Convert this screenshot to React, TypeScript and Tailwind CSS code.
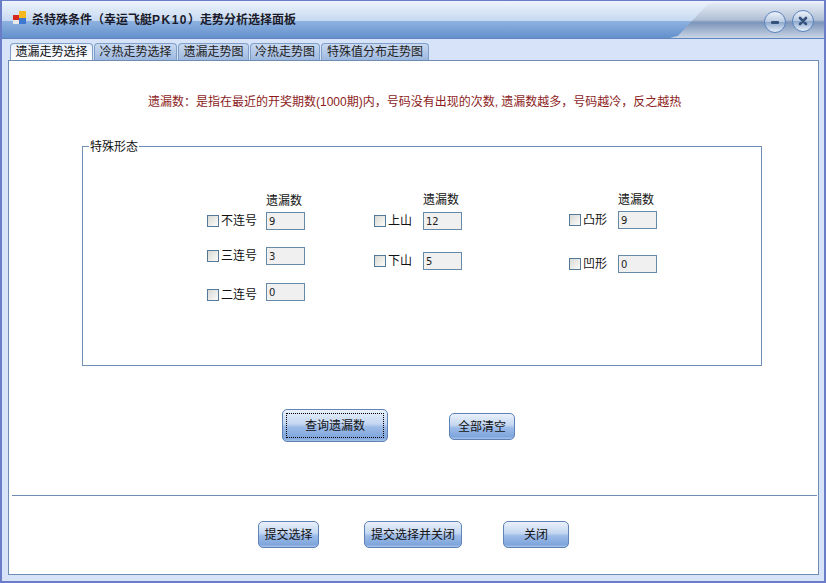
const font = 'font-["Liberation_Sans","Noto_Sans_CJK_SC",sans-serif]';

const tabs = [
  { label: '遗漏走势选择', width: 'w-[83px]' },
  { label: '冷热走势选择', width: 'w-[83px]' },
  { label: '遗漏走势图', width: 'w-[71px]' },
  { label: '冷热走势图', width: 'w-[70px]' },
  { label: '特殊值分布走势图', width: 'w-[108px]' },
];

function Check({ label, labelWidth }: { label: string; labelWidth: string }) {
  return (
    <label className={`flex items-center ${labelWidth}`}>
      <input
        type="checkbox"
        className="h-[12px] w-[12px] shrink-0 appearance-none border border-[#55799b] bg-gradient-to-br from-[#d9d9d4] to-[#fbfbfb]"
      />
      <span className="ml-[2px] text-[12px] leading-[16px] whitespace-nowrap text-[#111]">{label}</span>
    </label>
  );
}

function CountBox({ value }: { value: string }) {
  return (
    <input
      readOnly
      value={value}
      className='h-[18px] w-[39px] border border-[#6489a9] bg-[#f0f0f0] pl-[2px] font-["DejaVu_Sans",sans-serif] text-[10px] text-[#222] outline-none'
    />
  );
}

function ActionButton({ label, width }: { label: string; width: string }) {
  return (
    <button
      className={`flex h-[27px] items-center justify-center rounded-[5px] border border-[#5f83b5] bg-[linear-gradient(#eaf1fb,#c3d6f1_45%,#9dbbe8_55%,#7fa6dc_90%,#a6c2ea)] text-[12px] text-[#111] ${width}`}
    >
      {label}
    </button>
  );
}

function WindowButton({ children, className }: { children: React.ReactNode; className: string }) {
  return (
    <div
      className={`flex h-[22px] w-[22px] items-center justify-center rounded-full border border-[#5b84bd] bg-[linear-gradient(#eef3fa,#b9cbe3_48%,#8ea9ce_52%,#e6f0fb)] ${className}`}
    >
      {children}
    </div>
  );
}

export default function App() {
  return (
    <div className={`flex h-[583px] w-[826px] flex-col border-x-[2px] border-t-[1px] border-b-[2px] border-[#6a7dc6] bg-[#d6e3f8] ${font}`}>
      {/* title bar */}
      <div className="relative flex h-[38px] shrink-0 items-center border-b border-[#5f86bd] bg-[linear-gradient(#eef4fc,#c6d9f1_53%,#8db2e0_55%,#6490cc)] pl-[11px]">
        <svg width="16" height="14" viewBox="0 0 16 14" className="-mt-[3px] shrink-0">
          <rect x="0" y="4" width="6" height="5" fill="#d8281c" />
          <rect x="6" y="0" width="7" height="7" fill="#f5b81e" />
          <rect x="0" y="9" width="6" height="4" fill="#e8e8e8" />
          <rect x="6" y="7" width="7" height="6" fill="#3f78d0" />
        </svg>
        <span className="ml-[3px] text-[12px] font-bold whitespace-nowrap text-[#1a1a2a]">
          杀特殊条件（幸运飞艇<span className="tracking-[1.5px]">PK10</span>）走势分析选择面板
        </span>
        <div className="absolute top-0 right-0 bottom-0 w-[154px] bg-[linear-gradient(#e9eff8,#b3c1d6_50%,#7c95ba_58%,#c9d5e6)] [clip-path:polygon(0_100%,8px_94%,38px_8%,46px_4%,100%_4%,100%_100%)]" />
        <div className="absolute top-[8px] right-[10px] flex items-center gap-[6px]">
          <WindowButton className="mt-[2px]">
            <span className="h-[3px] w-[8px] rounded-[1px] bg-[#34527c]" />
          </WindowButton>
          <WindowButton className="">
            <svg width="10" height="10" viewBox="0 0 10 10">
              <path d="M2 2 L8 8 M8 2 L2 8" stroke="#34527c" strokeWidth="2.6" strokeLinecap="round" />
            </svg>
          </WindowButton>
        </div>
      </div>

      {/* tabs */}
      <div className="mt-[4px] flex h-[17px] shrink-0 gap-[1px] pl-[8px]">
        {tabs.map((tab, i) => (
          <div
            key={tab.label}
            className={`flex items-center justify-center rounded-t-[4px] border border-b-0 border-[#7f9fc8] text-[12px] leading-none ${tab.width} ${
              i === 0
                ? 'bg-gradient-to-b from-[#e6eefa] to-white text-[#111]'
                : 'bg-gradient-to-b from-[#c9d9f0] to-[#9db8df] text-[#222]'
            }`}
          >
            {tab.label}
          </div>
        ))}
      </div>

      {/* panel */}
      <div className="mr-[5px] mb-[6px] ml-[6px] flex flex-1 flex-col border border-[#6d8db5] bg-white">
        <p className="mt-[33px] ml-[139px] text-[12px] leading-[16px] whitespace-pre text-[#8c1c1c]">
          遗漏数：是指在最近的开奖期数(1000期)内，号码没有出现的次数, 遗漏数越多，号码越冷，反之越热
        </p>

        {/* group box */}
        <fieldset className="mt-[29px] ml-[73px] h-[227px] w-[680px] border border-[#6d8db5] pl-[124px]">
          <legend className="ml-[-118px] px-[1px] pt-[1px] text-[12px] leading-[14px] text-[#111]">特殊形态</legend>
          <div className="flex">
            <div className="mt-[39px] flex w-[167px] flex-col">
              <span className="ml-[59px] text-[12px] leading-[16px] text-[#111]">遗漏数</span>
              <div className="mt-[3px] flex items-center">
                <Check label="不连号" labelWidth="w-[59px]" />
                <CountBox value="9" />
              </div>
              <div className="mt-[17px] flex items-center">
                <Check label="三连号" labelWidth="w-[59px]" />
                <CountBox value="3" />
              </div>
              <div className="mt-[18px] flex items-start">
                <div className="mt-[4px]">
                  <Check label="二连号" labelWidth="w-[59px]" />
                </div>
                <CountBox value="0" />
              </div>
            </div>
            <div className="mt-[38px] flex w-[195px] flex-col">
              <span className="ml-[49px] text-[12px] leading-[16px] text-[#111]">遗漏数</span>
              <div className="mt-[4px] flex items-center">
                <Check label="上山" labelWidth="w-[49px]" />
                <CountBox value="12" />
              </div>
              <div className="mt-[22px] flex items-center">
                <Check label="下山" labelWidth="w-[49px]" />
                <CountBox value="5" />
              </div>
            </div>
            <div className="mt-[38px] flex flex-col">
              <span className="ml-[49px] text-[12px] leading-[16px] text-[#111]">遗漏数</span>
              <div className="mt-[3px] flex items-center">
                <Check label="凸形" labelWidth="w-[49px]" />
                <CountBox value="9" />
              </div>
              <div className="mt-[26px] flex items-center">
                <Check label="凹形" labelWidth="w-[49px]" />
                <CountBox value="0" />
              </div>
            </div>
          </div>
        </fieldset>

        {/* query buttons */}
        <div className="mt-[43px] flex items-start pl-[273px]">
          <button className="flex h-[33px] w-[106px] items-center justify-center rounded-[5px] border border-[#5f83b5] bg-[linear-gradient(#eaf1fb,#c3d6f1_45%,#9dbbe8_55%,#7fa6dc_90%,#a6c2ea)] p-[3px] text-[12px] text-[#111]">
            <span className="flex h-full w-full items-center justify-center border border-dotted border-black">查询遗漏数</span>
          </button>
          <div className="mt-[4px] ml-[61px]">
            <ActionButton label="全部清空" width="w-[66px]" />
          </div>
        </div>

        <div className="mt-[53px] mr-[1px] ml-[3px] h-[1px] bg-[#6d8db5]" />

        {/* bottom buttons */}
        <div className="mt-[25px] flex pl-[249px]">
          <ActionButton label="提交选择" width="w-[61px]" />
          <div className="ml-[45px]">
            <ActionButton label="提交选择并关闭" width="w-[98px]" />
          </div>
          <div className="ml-[41px]">
            <ActionButton label="关闭" width="w-[66px]" />
          </div>
        </div>
      </div>
    </div>
  );
}
